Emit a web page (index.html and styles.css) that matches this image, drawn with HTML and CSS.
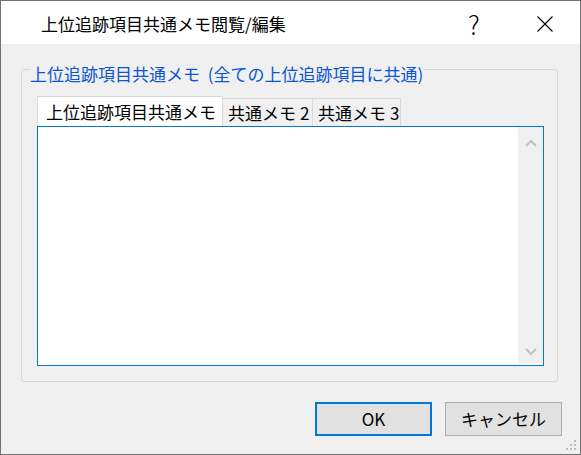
FILE: index.html
```html
<!DOCTYPE html>
<html lang="ja">
<head>
  <meta charset="UTF-8">
  <title>上位追跡項目共通メモ閲覧/編集</title>
  <link rel="stylesheet" href="styles.css">
</head>
<body>

<div class="dialog">
  <div class="titlebar">
    <span class="title">上位追跡項目共通メモ閲覧/編集</span>
    <span class="help">?</span>
    <svg class="close" width="16" height="16" viewBox="0 0 16 16">
      <path d="M0.5 0.5 L15.5 15.5 M15.5 0.5 L0.5 15.5" stroke="#000" stroke-width="1.1" fill="none"/>
    </svg>
  </div>

  <div class="content">
    <fieldset class="group">
      <legend>上位追跡項目共通メモ (全ての上位追跡項目に共通)</legend>

      <div class="tabs">
        <div class="tab tab-active">上位追跡項目共通メモ</div>
        <div class="tab tab-2">共通メモ<span class="num">2</span></div>
        <div class="tab tab-3">共通メモ<span class="num">3</span></div>
      </div>

      <div class="memo">
        <div class="memo-text"></div>
        <div class="scrollbar">
          <svg width="12" height="8" viewBox="0 0 12 8">
            <path d="M1 7 L6 2 L11 7" stroke="#c2c2c2" stroke-width="2.2" fill="none"/>
          </svg>
          <svg width="12" height="8" viewBox="0 0 12 8">
            <path d="M1 1 L6 6 L11 1" stroke="#c2c2c2" stroke-width="2.2" fill="none"/>
          </svg>
        </div>
      </div>
    </fieldset>

    <div class="buttons">
      <button class="btn btn-default">OK</button>
      <button class="btn">キャンセル</button>
    </div>
  </div>

  <svg class="grip" width="12" height="12" viewBox="0 0 12 12">
    <rect x="8" y="0" width="2" height="2" fill="#bdbdbd"/>
    <rect x="4" y="4" width="2" height="2" fill="#bdbdbd"/>
    <rect x="8" y="4" width="2" height="2" fill="#bdbdbd"/>
    <rect x="0" y="8" width="2" height="2" fill="#bdbdbd"/>
    <rect x="4" y="8" width="2" height="2" fill="#bdbdbd"/>
    <rect x="8" y="8" width="2" height="2" fill="#bdbdbd"/>
  </svg>
</div>

</body>
</html>
```

FILE: styles.css
```css
* {
  box-sizing: border-box;
  margin: 0;
  padding: 0;
  font-family: "Noto Sans CJK JP", "Noto Sans", sans-serif;
}

body {
  background: #f0f0f0;
  width: 581px;
  height: 455px;
  overflow: hidden;
}

.dialog {
  position: relative;
  width: 581px;
  height: 455px;
  border: 1px solid #727272;
  background: #f0f0f0;
}

.titlebar {
  height: 43px;
  background: #fff;
  display: flex;
  align-items: center;
  padding-left: 40px;
}

.title {
  font-size: 17px;
  color: #000;
  flex: 1;
  line-height: 20px;
  padding-top: 2px;
}

.help {
  font-size: 26px;
  font-weight: 300;
  line-height: 20px;
  color: #000;
  width: 16px;
  margin-right: 53px;
  padding-top: 2px;
}

.close {
  margin-right: 27px;
  margin-top: 2px;
}

.content {
  padding: 10px 22px 0 20px;
}

.group {
  width: 537px;
  border: 1px solid #d8d8d3;
  border-radius: 3px;
  padding: 12px 13px 15px 15px;
}

.group legend {
  margin-left: -7px;
  padding: 10px 1px 0 0;
  font-size: 17px;
  line-height: 20px;
  word-spacing: 4px;
  color: #0a55d6;
}

.tabs {
  display: flex;
  align-items: flex-end;
  height: 30px;
}

.tab {
  height: 28px;
  border: 1px solid #d9d9d9;
  border-bottom: none;
  background: #f0f0f0;
  font-size: 17px;
  line-height: 28px;
  color: #000;
  white-space: nowrap;
}

.tab .num {
  margin-left: 4px;
}

.tab-active {
  height: 30px;
  line-height: 29px;
  width: 186px;
  background: #fff;
  padding-left: 8px;
  position: relative;
  z-index: 1;
}

.tab-2 {
  width: 91px;
  margin-left: -1px;
  padding-left: 5px;
}

.tab-3 {
  width: 89px;
  margin-left: -1px;
  padding-left: 5px;
}

.memo {
  width: 507px;
  height: 240px;
  border: 1px solid #0078d7;
  background: #fff;
  display: flex;
}

.memo-text {
  flex: 1;
}

.scrollbar {
  width: 25px;
  margin: 0 0 1px 0;
  background: #f0f0f0;
  display: flex;
  flex-direction: column;
  justify-content: space-between;
  align-items: center;
  padding: 12px 0 8px;
}

.buttons {
  display: flex;
  justify-content: flex-end;
  gap: 13px;
  margin-top: 20px;
  margin-right: -4px;
}

.btn {
  width: 117px;
  height: 34px;
  border: 1px solid #adadad;
  background: #e1e1e1;
  font-size: 17px;
  color: #000;
  line-height: 20px;
}

.btn-default {
  border: 2px solid #0078d7;
}

.grip {
  position: absolute;
  right: 2px;
  bottom: 2px;
}
```
